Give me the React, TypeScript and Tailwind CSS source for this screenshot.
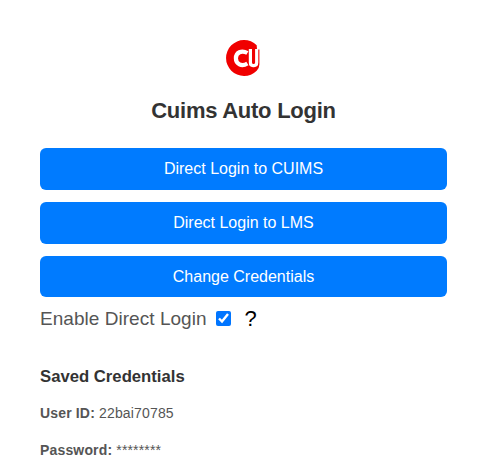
import { useState } from "react";

const actions = [
  { label: "Direct Login to CUIMS", size: "h-[42px]" },
  { label: "Direct Login to LMS", size: "h-[42px]" },
  { label: "Change Credentials", size: "h-[41px]" },
];

function Logo() {
  return (
    <svg width="36" height="36" viewBox="0 0 36 36" className="block" aria-label="CU">
      <path d="M30.7 5.2A18 18 0 1 0 30.7 30.8Q33.4 27.7 33.4 24.5V9.5H31Z" fill="#f00000" />
      <path
        d="M21.4 13C15.5 9.6 9.9 12.6 9.9 18.3S15.5 27 21.4 23.5"
        fill="none"
        stroke="#fff"
        strokeWidth="4.2"
      />
      <path
        d="M24.4 9V22.6Q24.4 25.6 27 25.6H28Q30.7 25.6 30.7 22.6V9"
        fill="none"
        stroke="#fff"
        strokeWidth="3.2"
      />
    </svg>
  );
}

export default function App() {
  const [enabled, setEnabled] = useState(true);

  return (
    <main className="h-[474px] w-[492px] overflow-hidden bg-white pt-10 pr-[45px] pl-10 font-['Liberation_Sans',Arial,sans-serif] text-[#555]">
      <header className="flex flex-col items-center">
        <Logo />
        <h1 className="mt-[20px] text-[22px] leading-[30px] font-bold tracking-[-0.25px] text-[#333]">Cuims Auto Login</h1>
      </header>
      <div className="mt-[22px] flex flex-col gap-3">
        {actions.map(({ label, size }) => (
          <button key={label} className={`${size} w-full rounded-md bg-[#007bff] text-base text-white`}>
            {label}
          </button>
        ))}
      </div>
      <div className="mt-[9px] flex h-[26px] items-center">
        <label htmlFor="direct" className="text-[19px] leading-[26px] tracking-[0.04px]">Enable Direct Login</label>
        <input
          id="direct"
          type="checkbox"
          checked={enabled}
          onChange={(e) => setEnabled(e.target.checked)}
          className="-mt-[2px] ml-[9px] size-[15px] accent-[#0075ff]"
        />
        <span className="ml-[14px] text-[22px] leading-[26px] text-black">?</span>
      </div>
      <section>
        <h2 className="mt-[33px] text-[16.7px] leading-6 font-bold text-[#333]">Saved Credentials</h2>
        <p className="mt-[14px] text-[14px] leading-5 tracking-[0.16px]"><b>User ID:</b> 22bai70785</p>
        <p className="mt-[17px] text-[14px] leading-5 tracking-[0.16px]"><b>Password:</b> ********</p>
      </section>
    </main>
  );
}
